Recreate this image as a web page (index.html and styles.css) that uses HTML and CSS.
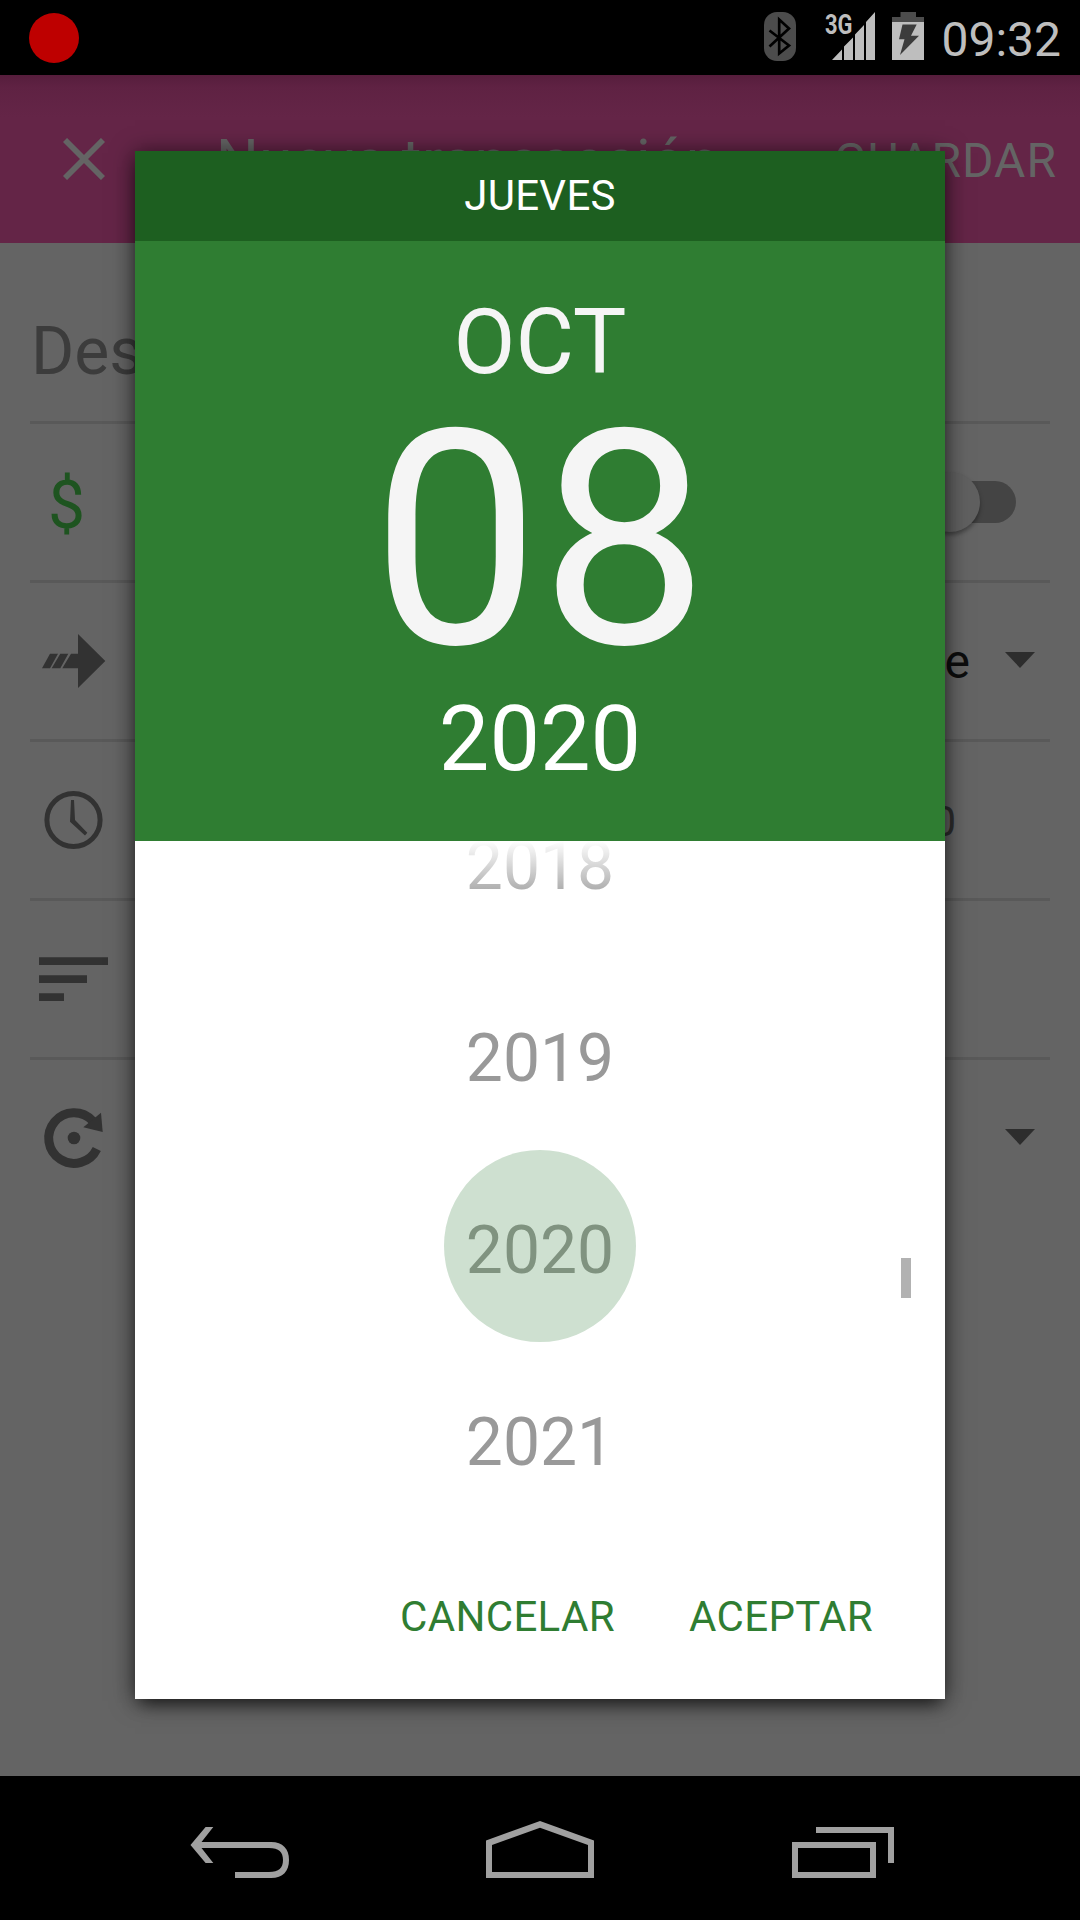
FILE: index.html
```html
<!DOCTYPE html>
<html lang="es">
<head>
<meta charset="utf-8">
<title>Nueva transacción</title>
<link rel="stylesheet" href="styles.css">
</head>
<body>
<div class="screen">
  <header class="status-bar">
    <span class="record-dot"></span>
    <div class="status-right">
      <svg class="status-icons" viewBox="0 0 170 75">
        <rect x="4" y="12" width="32" height="49" rx="13" fill="#4c4c4c"/>
        <path d="M9.500 30.500 L29 45.500 L19.200 53.500 V19.500 L29 28.500 L9.500 46.500" fill="none" stroke="#000" stroke-width="2.700"/>
        <text class="network" x="65" y="33.500" textLength="27.500" lengthAdjust="spacingAndGlyphs">3G</text>
        <path d="M72 60 L82 49.500 V60Z M84 60 V46.500 L93 37.500 V60Z M95 60 V34.500 L104 25 V60Z M106 60 V22 L115 12 V60Z" fill="#bebebe"/>
        <path d="M140.500 12 H156 V17 H164 V22 H132 V17 H140.500Z" fill="#4c4c4c"/>
        <rect x="132" y="22" width="32" height="38" fill="#bebebe"/>
        <path d="M142.500 24.500 H156.700 L151 35.800 H159 L140 55 L144.500 39.300 H139Z" fill="#3c3c3c"/>
      </svg>
      <span class="clock">09:32</span>
    </div>
  </header>

  <div class="toolbar">
    <svg class="close-icon" viewBox="0 0 42 42"><path d="M2 2 L40 40 M40 2 L2 40" stroke="#646464" stroke-width="5.800"/></svg>
    <h1 class="title">Nueva transacción</h1>
    <span class="save">GUARDAR</span>
  </div>

  <main class="form">
    <div class="row row-description"><span class="hint">Descripción</span></div>
    <div class="row">
      <span class="currency">$</span>
      <span class="switch"><span class="thumb"></span></span>
    </div>
    <div class="row">
      <svg class="row-icon" viewBox="0 0 80 156"><path d="M20 70.700 H28 L20 85.300 H12Z M30.300 70.700 H38.300 L30.300 85.300 H21.700Z M41 70.700 H48 V51 L75.300 78 L48 105 V85.300 H32.300Z"/></svg>
      <span class="value account">e</span>
      <span class="caret"></span>
    </div>
    <div class="row">
      <svg class="row-icon" viewBox="0 0 80 156"><circle cx="43.500" cy="78" r="26.600" fill="none" stroke="#323232" stroke-width="5"/><path d="M41 58 H44 L45 78 L57.300 90.700 L55 93.500 L40 79.700Z"/></svg>
      <span class="value time">0</span>
    </div>
    <div class="row">
      <svg class="row-icon" viewBox="0 0 80 156"><path d="M9 56.300 H78 V64 H9Z M9 74.300 H57 V82 H9Z M9 92.300 H34 V100 H9Z"/></svg>
    </div>
    <div class="row row-last">
      <svg class="row-icon" viewBox="0 0 80 156"><path d="M66.800 89 A25.300 25.300 0 1 1 62.500 60.800" fill="none" stroke="#323232" stroke-width="9"/><path d="M71 52.700 L72.700 72 L53.300 67.300Z"/><circle cx="44" cy="78" r="6.300"/></svg>
      <span class="caret"></span>
    </div>
  </main>

  <nav class="nav-bar">
    <svg viewBox="90 1776 300 144"><path d="M190.500 1845 L205.600 1827 H213.300 L201.500 1842 H271 C283 1842 289 1849 289 1860 S283 1878 271 1878 H235 V1872 H269 C279 1872 283 1868 283 1860 S279 1848 269 1848 H201.500 L213.300 1863 H205.600Z"/></svg>
    <svg viewBox="390 1776 300 144"><path fill-rule="evenodd" d="M540 1821 L594 1840.500 V1878 H486 V1840.500Z M540 1827.700 L492 1845 V1872 H588 V1845Z"/></svg>
    <svg viewBox="690 1776 300 144"><path fill-rule="evenodd" d="M792 1842 H876 V1878 H792Z M798 1848 V1872 H870 V1848Z M816 1827 H894 V1863 H888 V1833 H816Z"/></svg>
  </nav>

  <section class="dialog">
    <div class="weekday">JUEVES</div>
    <div class="date">
      <span class="month">OCT</span>
      <span class="day">08</span>
      <span class="year">2020</span>
    </div>
    <div class="year-list">
      <div class="years">
        <span class="year-item">2018</span>
        <span class="year-item">2019</span>
        <span class="year-item selected">2020</span>
        <span class="year-item">2021</span>
      </div>
      <span class="scroll-thumb"></span>
    </div>
    <div class="actions">
      <span>CANCELAR</span>
      <span>ACEPTAR</span>
    </div>
  </section>
</div>
</body>
</html>
```
FILE: styles.css
```css
* {
  box-sizing: border-box;
}

body {
  margin: 0;
  font-family: Roboto, sans-serif;
}

.screen {
  position: relative;
  display: flex;
  flex-direction: column;
  width: 1080px;
  height: 1920px;
  overflow: hidden;
  background: #646464;
}

.status-bar {
  display: flex;
  flex: none;
  align-items: center;
  justify-content: space-between;
  height: 75px;
  padding: 0 19px 0 29px;
  background: #000;
}

.record-dot {
  width: 50px;
  height: 50px;
  border-radius: 50%;
  background: #be0000;
}

.status-right {
  display: flex;
  align-items: center;
  gap: 11px;
}

.status-icons {
  width: 170px;
  height: 75px;
}

.network {
  font-size: 27px;
  font-weight: 700;
  fill: #bebebe;
}

.clock {
  padding-top: 4px;
  font-size: 48px;
  line-height: 56px;
  color: #bebebe;
}

.toolbar {
  display: flex;
  flex: none;
  align-items: center;
  height: 168px;
  padding: 0 24px 0 63px;
  background: linear-gradient(#561d3c, #5f2243 12px, #642547 42px);
  color: #646464;
}

.close-icon {
  width: 42px;
  height: 42px;
}

.title {
  margin: 4px 0 0 111px;
  font-size: 60px;
  font-weight: 400;
  line-height: 70px;
  letter-spacing: 0.4px;
}

.save {
  margin: 3px -1px 0 auto;
  font-size: 48px;
  line-height: 56px;
  letter-spacing: 1px;
}

.form {
  flex: 1;
  padding: 0 30px;
}

.row {
  display: flex;
  align-items: center;
  height: 159px;
  border-bottom: 3px solid #595959;
}

.row-description {
  height: 181px;
}

.row-last {
  border-bottom-color: transparent;
}

.hint {
  padding: 39px 0 0 1px;
  font-size: 66px;
  line-height: 78px;
  color: #3c3c3c;
}

.currency {
  padding: 7px 0 0 18px;
  font-size: 66px;
  line-height: 78px;
  color: #1e5420;
}

.switch {
  display: flex;
  align-items: center;
  width: 95px;
  height: 42px;
  margin: 0 34px 0 auto;
  border-radius: 21px;
  background: #444;
}

.thumb {
  width: 60px;
  height: 60px;
  margin-left: -1px;
  border-radius: 50%;
  background: #606060;
  box-shadow: 0 3px 4px rgba(0, 0, 0, 0.35);
}

.row-icon {
  width: 80px;
  height: 156px;
  fill: #323232;
}

.value {
  margin-left: auto;
}

.account {
  padding-top: 2px;
  margin-right: 35px;
  font-size: 48px;
  line-height: 56px;
  color: #0d0d0d;
}

.time {
  padding-top: 4px;
  margin-right: 94px;
  font-size: 42px;
  line-height: 50px;
  color: #2d2d2d;
}

.caret {
  width: 30px;
  height: 16px;
  margin: 0 15px 2px auto;
  background: #2d2d2d;
  clip-path: polygon(0 0, 100% 0, 50% 100%);
}

.value + .caret {
  margin-left: 0;
}

.nav-bar {
  display: flex;
  flex: none;
  justify-content: center;
  height: 144px;
  background: #000;
  fill: #a0a0a0;
}

.nav-bar svg {
  width: 300px;
  height: 144px;
}

/* Modal date picker floating over the form */
.dialog {
  position: absolute;
  top: 151px;
  left: 135px;
  display: flex;
  flex-direction: column;
  width: 810px;
  height: 1548px;
  background: #fff;
  box-shadow: 0 2px 22px rgba(0, 0, 0, 0.6), 0 10px 16px -6px rgba(0, 0, 0, 0.5);
}

.weekday {
  height: 90px;
  background: #1d5f20;
  color: #fff;
  font-size: 42px;
  line-height: 90px;
  text-align: center;
  letter-spacing: 0.3px;
}

.date {
  display: flex;
  flex-direction: column;
  align-items: center;
  height: 600px;
  padding-top: 49px;
  background: #2f7d32;
  color: #f5f5f5;
  font-size: 90px;
  line-height: 105px;
}

.day {
  font-size: 300px;
  line-height: 292px;
}

.year {
  color: #fff;
}

.year-list {
  position: relative;
  height: 693px;
  overflow: hidden;
}

.year-list::before {
  content: "";
  position: absolute;
  inset: 0 0 auto;
  height: 62px;
  background: linear-gradient(#fff, rgba(255, 255, 255, 0));
}

.years {
  display: flex;
  flex-direction: column;
  align-items: center;
  margin-top: -75px;
}

.year-item {
  width: 192px;
  height: 192px;
  padding-top: 8px;
  border-radius: 50%;
  color: #999;
  font-size: 66px;
  line-height: 186px;
  text-align: center;
}

.selected {
  background: #cee0d0;
  color: #809380;
}

.scroll-thumb {
  position: absolute;
  top: 417px;
  right: 34px;
  width: 10px;
  height: 40px;
  background: #b2b2b2;
}

.actions {
  display: flex;
  flex: 1;
  align-items: center;
  justify-content: flex-end;
  gap: 74px;
  padding-right: 72px;
  color: #2f7d32;
  font-size: 42px;
  letter-spacing: 0.35px;
}
```
